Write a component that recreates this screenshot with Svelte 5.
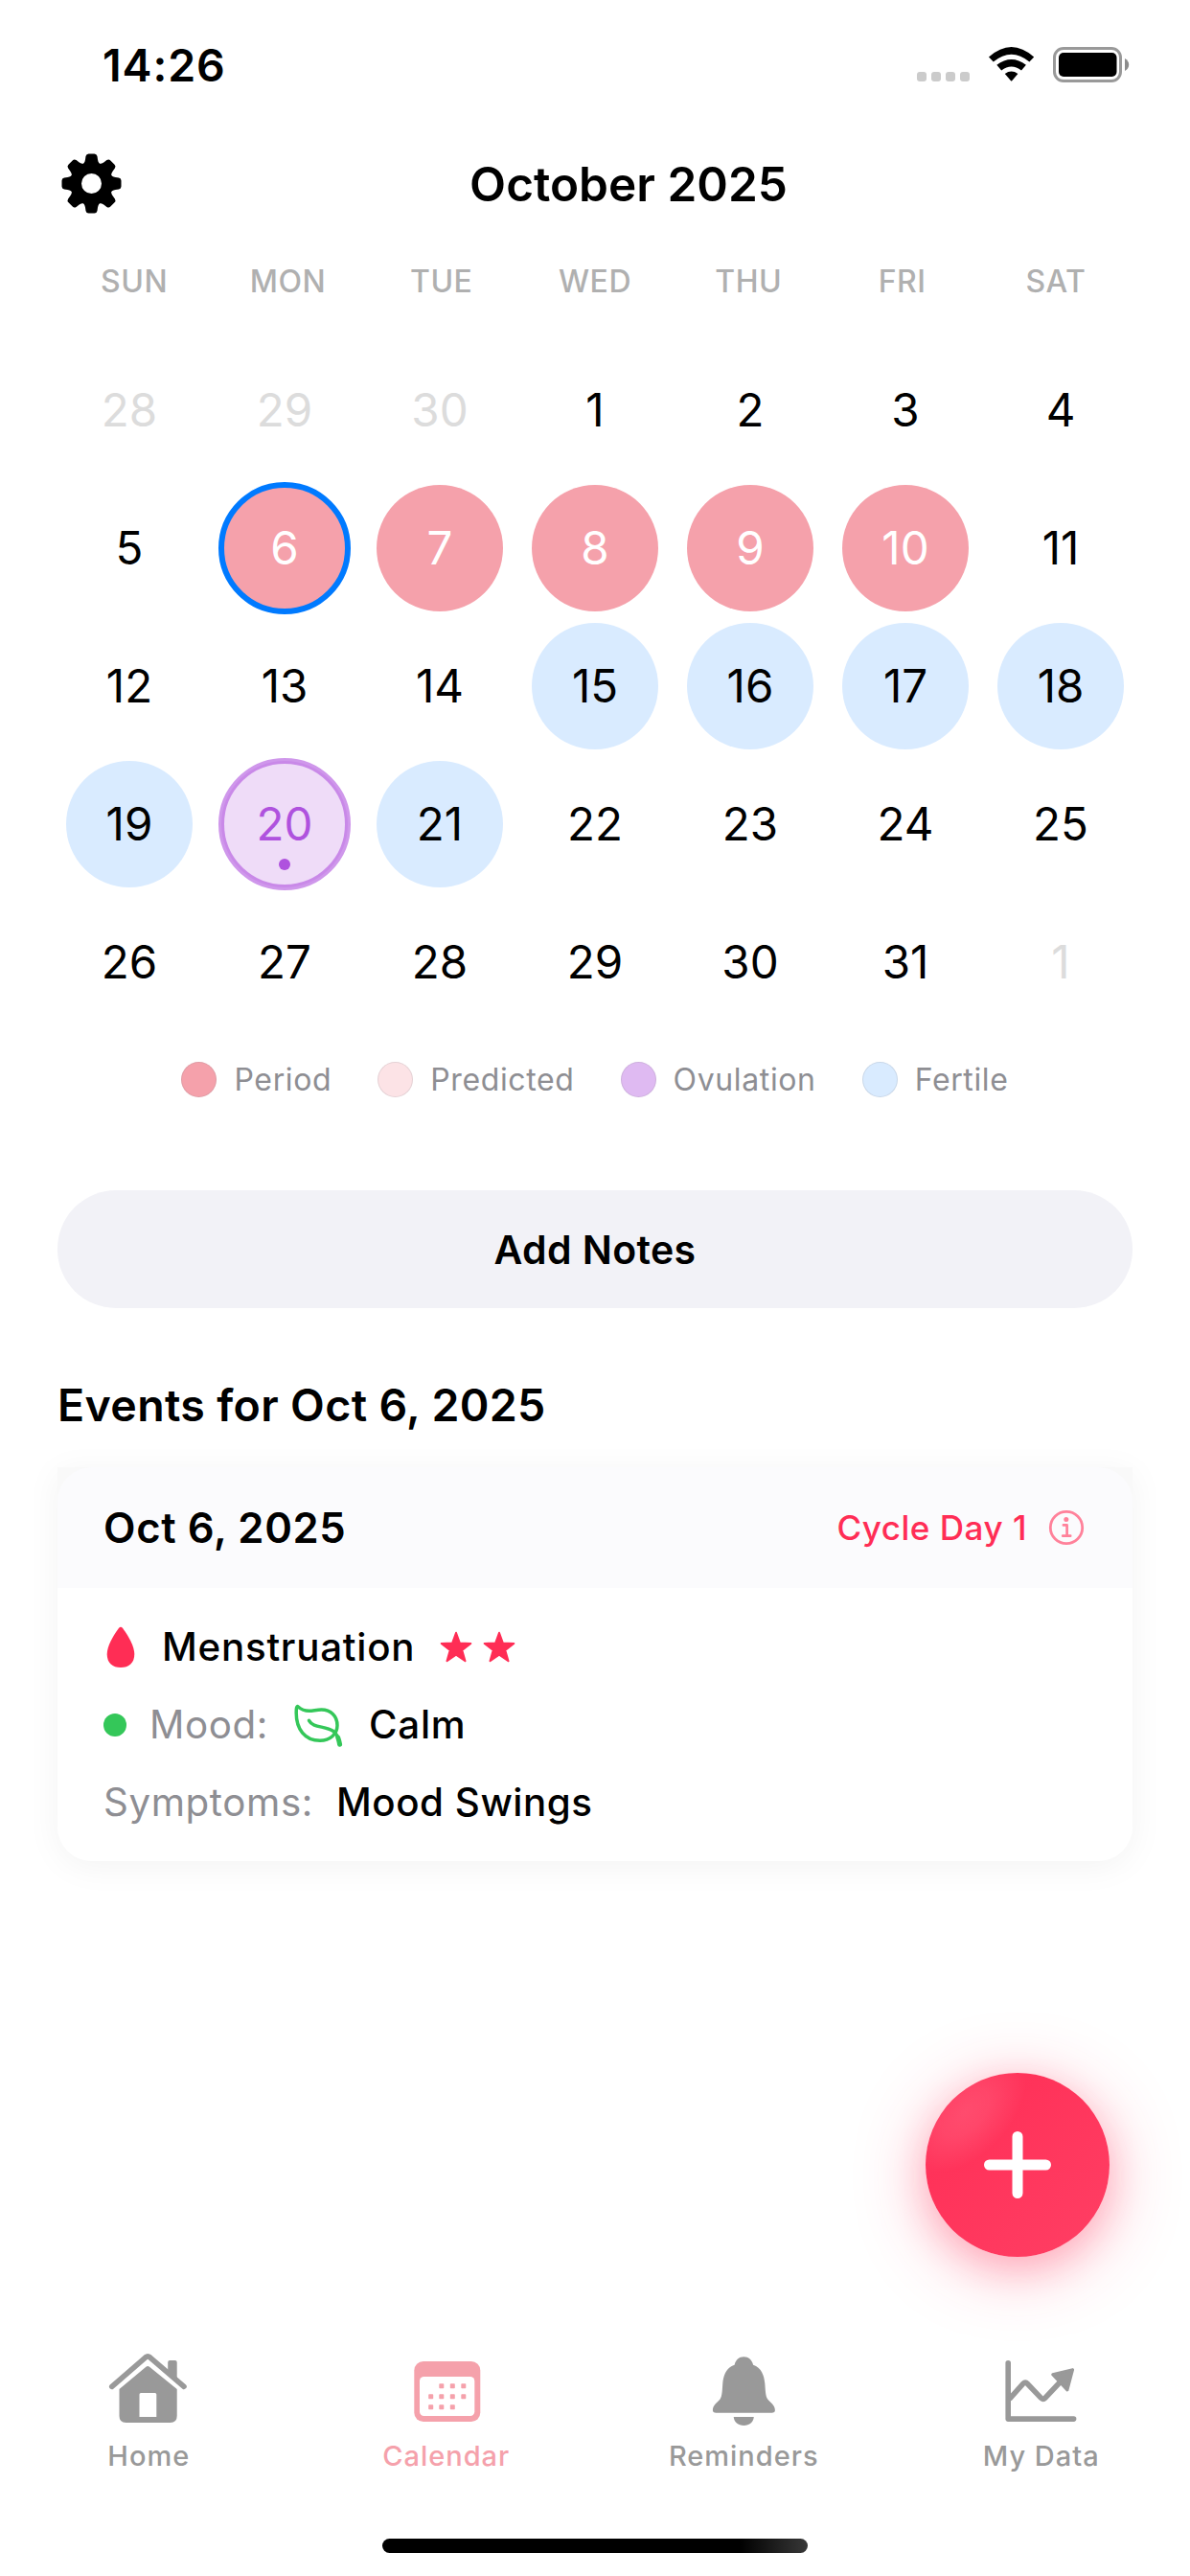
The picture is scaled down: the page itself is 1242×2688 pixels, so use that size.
<script lang="ts">
  type Kind = 'outside' | 'period' | 'fertile' | 'ovulation' | '';
  type Day = { label: number; kind: Kind; today?: boolean };

  const weekdays = ['SUN', 'MON', 'TUE', 'WED', 'THU', 'FRI', 'SAT'];

  function kindOf(day: number): Kind {
    if (day >= 6 && day <= 10) return 'period';
    if (day === 20) return 'ovulation';
    if (day >= 15 && day <= 21) return 'fertile';
    return '';
  }

  const days: Day[] = [
    ...[28, 29, 30].map((label) => ({ label, kind: 'outside' as Kind })),
    ...Array.from({ length: 31 }, (_, i) => ({ label: i + 1, kind: kindOf(i + 1), today: i + 1 === 6 })),
    { label: 1, kind: 'outside' as Kind }
  ];

  const legend = [
    { name: 'Period', tone: 'tone-period' },
    { name: 'Predicted', tone: 'tone-predicted' },
    { name: 'Ovulation', tone: 'tone-ovulation' },
    { name: 'Fertile', tone: 'tone-fertile' }
  ];

  const teeth = [0, 45, 90, 135, 180, 225, 270, 315];

  const calendarDots = [
    [44.8, 39.7], [56.3, 39.7], [67.8, 39.7],
    [33.7, 50.7], [44.8, 50.7], [56.3, 50.7], [67.8, 50.7],
    [33.7, 61.7], [44.8, 61.7], [56.3, 61.7]
  ];
</script>

<main class="screen">
  <div class="status">
    <span class="clock">14:26</span>
    <svg class="status-icons" width="228" height="40" viewBox="954 48 228 40">
      <g fill="#cbcbcb">
        <rect x="957" y="75" width="10" height="10" rx="3" />
        <rect x="972" y="75" width="10" height="10" rx="3" />
        <rect x="987" y="75" width="10" height="10" rx="3" />
        <rect x="1002" y="75" width="10" height="10" rx="3" />
      </g>
      <path d="M1032 59.5 Q1055.6 38.5 1079.2 59.5 L1074.4 64.5 Q1055.6 48.8 1036.8 64.5 Z" />
      <path d="M1040.3 67.8 Q1055.6 56 1070.9 67.8 L1066 73.4 Q1055.6 65.6 1045.2 73.4 Z" />
      <path d="M1048.8 77 Q1055.6 72.2 1062.4 77 L1056.4 84 Q1055.6 85 1054.8 84 Z" />
      <rect x="1100.5" y="50.5" width="69" height="34" rx="9.5" fill="none" stroke="#999" stroke-width="3" />
      <rect x="1105" y="55" width="60.5" height="25" rx="5" />
      <path d="M1174 61 Q1178.2 63.5 1178.2 67.5 Q1178.2 71.5 1174 74 Z" fill="#8c8c8c" />
    </svg>
  </div>

  <header class="topbar">
    <svg class="gear" width="70" height="70" viewBox="-35.500 -34.500 70 70">
      <circle r="16.5" fill="none" stroke="#000" stroke-width="12" />
      {#each teeth as angle}
        <path transform="rotate({angle})" d="M-9.5 -19 L-7.8 -21.5 Q-6.8 -23 -6.5 -25 L-6 -28.5 Q-5.4 -31 -3 -31 H3 Q5.4 -31 6 -28.5 L6.5 -25 Q6.8 -23 7.8 -21.5 L9.5 -19 Z" />
      {/each}
    </svg>
    <h1>October 2025</h1>
  </header>

  <div class="weekdays">
    {#each weekdays as name}<span>{name}</span>{/each}
  </div>

  <div class="days">
    {#each days as day}
      <div class="cell">
        <div class="day {day.kind}" class:today={day.today}>
          <span>{day.label}</span>
          {#if day.kind === 'ovulation'}<i class="marker"></i>{/if}
        </div>
      </div>
    {/each}
  </div>

  <div class="legend">
    {#each legend as item}
      <div class="legend-item"><i class="swatch {item.tone}"></i>{item.name}</div>
    {/each}
  </div>

  <button class="notes">Add Notes</button>

  <h2>Events for Oct 6, 2025</h2>

  <section class="card">
    <div class="card-head">
      <h3>Oct 6, 2025</h3>
      <span class="cycle">Cycle Day 1</span>
      <svg width="38" height="38" viewBox="0 0 38 38" fill="none" stroke="#ff819a" stroke-width="2.8">
        <circle cx="19" cy="19" r="16.700" />
        <path d="M15.900 16.400 H19.600 V27.500 M15.200 27.700 H23.200" stroke-linecap="round" stroke-linejoin="round" stroke-width="2.700" />
        <circle cx="18.800" cy="10.600" r="2.500" fill="#ff819a" stroke="none" />
      </svg>
    </div>
    <div class="card-body">
      <div class="row">
        <svg class="drop" width="30" height="44" viewBox="0 0 30 44">
          <path d="M12.800 2.200 Q15 -0.600 17.200 2.200 C23 10 29.300 21 29.300 29 C29.300 38.500 23.500 43 15 43 C6.500 43 0.700 38.500 0.700 29 C0.700 21 7 10 12.800 2.200 Z" fill="#ff2d55" />
        </svg>
        <span class="value">Menstruation</span>
        <span class="stars">
          {#each [1, 2] as _}
            <svg width="34" height="34" viewBox="0 0 34 34">
              <path d="M17 1.800 L20.900 12.500 L32.300 12.900 L23.300 19.900 L26.500 31.300 L17 24.700 L7.500 31.300 L10.700 19.900 L1.700 12.900 L13.100 12.500 Z" fill="#ff2d55" stroke="#ff2d55" stroke-width="2" stroke-linejoin="round" />
            </svg>
          {/each}
        </span>
      </div>
      <div class="row">
        <i class="mood-dot"></i>
        <span class="label">Mood:</span>
        <svg class="leaf" width="52" height="46" viewBox="0 0 52 46" fill="none" stroke="#34c759" stroke-linecap="round" stroke-linejoin="round">
          <path d="M4.200 3 C7 5.500 10 7.300 15.500 7.300 C20 7.300 23 6.100 28.500 6.100 C38 6.100 45 12.500 45 22.500 C45 31.500 37.500 38.300 27 38.300 C11 38.300 2.200 26 2.200 9.500 C2.200 5.500 2.400 1.500 4.200 3 Z" stroke-width="3.500" />
          <path d="M15.500 17.300 C20 25.500 32 22.500 41 28.500 C44.500 31 46.500 36 47.300 42" stroke-width="3.500" />
          <path d="M45.700 35 C46.800 38 47.200 40 47.600 42.300" stroke-width="5" />
        </svg>
        <span class="value">Calm</span>
      </div>
      <div class="row">
        <span class="label">Symptoms:</span>
        <span class="value symptoms">Mood Swings</span>
      </div>
    </div>
  </section>

  <nav class="tabs">
    <div class="tab">
      <svg width="100" height="84" viewBox="0 0 100 84">
        <path d="M11.800 40.300 L46.900 9.800 Q49.200 8 51.500 9.800 L87 40.300" fill="none" stroke="#999" stroke-width="5.600" stroke-linecap="round" />
        <path d="M70.200 27.500 V15 Q70.200 13 72.200 13 H77.700 Q79.700 13 79.700 15 V36 Z" fill="#999" />
        <path fill-rule="evenodd" d="M19.500 43 L47.400 19.700 Q49.200 18.300 51 19.700 L79.700 43 V71 Q79.700 78 72.700 78 H26.500 Q19.500 78 19.500 71 Z M42 47 Q40.500 47 40.500 48.500 V72 H58.300 V48.500 Q58.300 47 56.800 47 Z" fill="#999" />
      </svg>
      <span>Home</span>
    </div>
    <div class="tab active">
      <svg width="100" height="84" viewBox="0 0 100 84">
        <rect x="16.300" y="14" width="69" height="63" rx="9.500" fill="#f5a1ab" />
        <rect x="22" y="30" width="57.300" height="41" rx="4.500" fill="#fff" />
        {#each calendarDots as [cx, cy]}
          <rect x={cx - 2.5} y={cy - 2.5} width="5" height="5" rx="0.800" fill="#f5a1ab" />
        {/each}
      </svg>
      <span>Calendar</span>
    </div>
    <div class="tab">
      <svg width="100" height="84" viewBox="0 0 100 84" fill="#999">
        <path d="M50.300 9.300 C55.300 9.300 58.900 12.500 60.100 17.700 C68.500 20.500 71.600 28.500 72.300 37 C72.900 44 72.800 49.500 75 53.300 C77.500 56.800 82.900 59.500 82.900 65 Q82.900 67.800 79.500 67.800 H21.300 Q17.900 67.800 17.900 65 C17.900 59.500 23.200 56.800 25.700 53.300 C27.900 49.500 27.700 44 28.300 37 C29 28.500 32.200 20.500 40.600 17.700 C41.800 12.500 45.300 9.300 50.300 9.300 Z" />
        <path d="M39.700 72 H60.800 C60.300 77.500 56.300 81 50.300 81 C44.300 81 40.200 77.500 39.700 72 Z" />
      </svg>
      <span>Reminders</span>
    </div>
    <div class="tab">
      <svg width="100" height="84" viewBox="0 0 100 84" fill="none" stroke="#999" stroke-width="5.600" stroke-linejoin="round">
        <path d="M15.200 15.800 V74.100 H83.600" stroke-linecap="round" />
        <path d="M16.500 53.300 L31 37.200 Q33.100 35 35.200 37.200 L49.400 52.200 Q51.600 54.500 53.800 52.200 L70.500 34.500" />
        <path d="M82.600 22.600 L61.700 27.800 L76.900 44 Z" fill="#999" stroke-width="3" />
      </svg>
      <span>My Data</span>
    </div>
  </nav>

  <div class="home-indicator"></div>

  <button class="fab" aria-label="Add">
    <svg width="192" height="192" viewBox="0 0 192 192">
      <defs>
        <linearGradient id="fabFill" x1="0" y1="0" x2="1" y2="1">
          <stop offset="0" stop-color="#ff2d55" />
          <stop offset="1" stop-color="#ff3f64" />
        </linearGradient>
        <radialGradient id="fabShine">
          <stop offset="0" stop-color="#fff" stop-opacity="0.130" />
          <stop offset="0.400" stop-color="#fff" stop-opacity="0.100" />
          <stop offset="1" stop-color="#fff" stop-opacity="0" />
        </radialGradient>
        <clipPath id="fabClip"><circle cx="96" cy="96" r="96" /></clipPath>
      </defs>
      <circle cx="96" cy="96" r="96" fill="url(#fabFill)" />
      <g clip-path="url(#fabClip)">
        <ellipse cx="41" cy="41" rx="78" ry="46" transform="rotate(-45 41 41)" fill="url(#fabShine)" />
      </g>
      <path d="M96 66.500 V125.500 M66.500 96 H125.500" stroke="#fff" stroke-width="11" stroke-linecap="round" />
    </svg>
  </button>
</main>

<style>
  :global(body) { margin: 0; background: #fff; }

  .screen {
    position: relative;
    box-sizing: border-box;
    width: 1242px;
    height: 2688px;
    display: flex;
    flex-direction: column;
    overflow: hidden;
    background: #fff;
    color: #000;
    font-family: Inter, 'Liberation Sans', sans-serif;
  }

  svg { display: block; flex: none; }
  h1, h2, h3 { margin: 0; font-weight: 600; }
  button { border: 0; padding: 0; font-family: inherit; color: inherit; }

  .status {
    height: 136px;
    padding: 0 60px 0 107px;
    display: flex;
    align-items: center;
    justify-content: space-between;
  }
  .clock { font-size: 46.5px; font-weight: 600; letter-spacing: 0.9px; }

  .topbar { height: 112px; padding: 0 60px; display: flex; align-items: center; }
  .topbar h1 { flex: 1; text-align: center; font-size: 49.5px; }

  .weekdays {
    height: 91px;
    padding: 0 60px;
    display: grid;
    grid-template-columns: repeat(7, 1fr);
    align-items: center;
    text-align: center;
    font-size: 32px;
    font-weight: 500;
    letter-spacing: 0.5px;
    color: #b0b0b0;
  }

  .days {
    margin-top: 17px;
    padding: 0 54px;
    display: grid;
    grid-template-columns: repeat(7, 1fr);
    grid-auto-rows: 144px;
  }
  .cell { display: flex; align-items: center; justify-content: center; }
  .day {
    position: relative;
    width: 132px;
    height: 132px;
    border-radius: 50%;
    display: flex;
    align-items: center;
    justify-content: center;
    font-size: 47.5px;
  }
  .day span { padding-bottom: 2px; }
  .outside { color: #dcdcdc; }
  .period { background: #f5a1ab; color: #fff; }
  .fertile { background: #d9ebff; }
  .ovulation { background: #efdcf8; color: #af52de; }
  .today::after, .ovulation::after {
    content: '';
    position: absolute;
    inset: -3px;
    border-radius: 50%;
    border: 6px solid #007aff;
  }
  .ovulation::after { border-color: rgba(175, 82, 222, 0.6); }
  .marker {
    position: absolute;
    left: 60px;
    bottom: 18px;
    width: 12px;
    height: 12px;
    border-radius: 50%;
    background: #af52de;
  }

  .legend {
    height: 100px;
    display: flex;
    align-items: center;
    justify-content: center;
    gap: 48px;
    font-size: 32px;
    letter-spacing: 0.63px;
    color: #8e8e93;
  }
  .legend-item { display: flex; align-items: center; gap: 18px; }
  .swatch {
    box-sizing: border-box;
    width: 37px;
    height: 37px;
    border-radius: 50%;
    border: 1.5px solid rgba(142, 142, 147, 0.2);
  }
  .tone-period { background: #f5a1ab; }
  .tone-predicted { background: #fce3e6; }
  .tone-ovulation { background: #dfbaf2; }
  .tone-fertile { background: #d9ebff; }

  .notes {
    margin: 66px 60px 0;
    height: 123px;
    border-radius: 61px;
    background: #f2f2f7;
    font-size: 41px;
    font-weight: 600;
    letter-spacing: 0.36px;
  }

  h2 {
    margin: 71px 60px 0;
    height: 60px;
    line-height: 60px;
    font-size: 46.5px;
    letter-spacing: 0.35px;
  }

  .card {
    margin: 35px 60px 0;
    height: 411px;
    border-radius: 0 0 36px 36px;
    background: linear-gradient(#f9f9f9 60px, #fff 60px);
    box-shadow: 0 6px 36px rgba(0, 0, 0, 0.05);
  }
  .card-head {
    height: 126px;
    padding: 0 50px 0 48px;
    display: flex;
    align-items: center;
    border-radius: 36px 36px 0 0;
    background: #fbfbfd;
  }
  .card-head h3 { flex: 1; font-size: 43.6px; letter-spacing: 0.65px; }
  .cycle { margin-right: 22px; font-size: 35px; font-weight: 500; letter-spacing: 0.53px; color: #ff2d55; }
  .card-body { padding: 21px 48px 0; }
  .row { height: 81px; display: flex; align-items: center; font-size: 40.3px; letter-spacing: 0.6px; }
  .value { font-weight: 500; letter-spacing: 0.75px; }
  .label { color: #8e8e93; }
  .symptoms { margin-left: 24px; letter-spacing: 0.54px; }
  .drop { margin: 0 28px 0 3px; }
  .stars { margin-left: 26px; display: flex; gap: 11px; }
  .mood-dot { width: 24px; height: 24px; margin-right: 24px; border-radius: 50%; background: #34c759; }
  .leaf { margin: 2px 26px 0 27px; }

  .tabs { margin-top: auto; display: grid; grid-template-columns: repeat(4, 1fr); }
  .tab {
    display: flex;
    flex-direction: column;
    align-items: center;
    gap: 9px;
    font-size: 29px;
    font-weight: 500;
    line-height: 40px;
    letter-spacing: 1px;
    color: #999;
  }
  .active { color: #f5a1ab; }

  .home-indicator {
    align-self: center;
    width: 444px;
    height: 15px;
    margin: 66px 0 24px;
    border-radius: 8px;
    background: linear-gradient(90deg, #000 84%, #383838);
  }

  .fab {
    position: absolute;
    right: 84px;
    bottom: 333px;
    width: 192px;
    height: 192px;
    border-radius: 50%;
    background: none;
    box-shadow: 0 12px 72px rgba(255, 45, 85, 0.35), 0 12px 36px rgba(255, 45, 85, 0.2);
  }
</style>
